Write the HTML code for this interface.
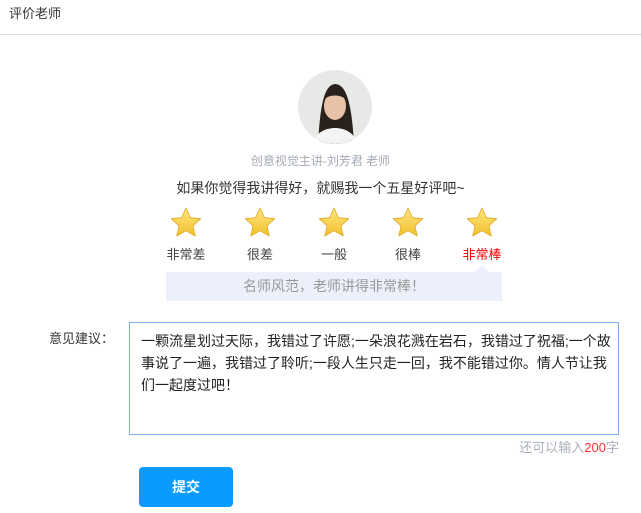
<!DOCTYPE html>
<html><head><meta charset="utf-8"><style>
body{margin:0;width:641px;height:513px;background:#fff;font-family:"Liberation Sans","Noto Sans CJK SC",sans-serif;position:relative;overflow:hidden;color:#333}
.a{position:absolute}
.hdr{left:9px;top:5px;font-size:13px;color:#333;line-height:18px}
.line{left:0;top:34px;width:641px;height:1px;background:#ddd}
.av{left:298px;top:70px;width:74px;height:74px;border-radius:50%;background:#e6e9e6;overflow:hidden}
.c{width:641px;left:0;text-align:center}
.lab{top:246px;font-size:13px;width:60px;text-align:center;line-height:18px;color:#444}
.tip{left:166px;top:272px;width:336px;height:29px;background:#ebf0fa;text-align:center;line-height:29px;font-size:14px;color:#999}
.ta{left:129px;top:322px;width:470px;height:97px;border:1px solid #82aaf0;padding:7px 7px 7px 11px;font-size:14px;line-height:22px;color:#222}
.btn{left:139px;top:467px;width:94px;height:40px;background:#0a9bff;border-radius:4px;color:#fff;font-size:14px;font-weight:bold;text-align:center;line-height:40px}
</style></head><body>
<div class="a hdr">评价老师</div>
<div class="a line"></div>
<div class="a av"><svg width="74" height="74"><path d="M20 74 C22 40 25 15 37 14 C50 14 54 40 56 74Z" fill="#2a201c"/><ellipse cx="37" cy="36" rx="11" ry="14" fill="#e8c2a8"/><path d="M14 74 C18 62 28 58 37 58 C46 58 56 62 60 74Z" fill="#f4f4f4"/><path d="M26 30 C28 18 46 18 48 30 C44 24 30 24 26 30Z" fill="#2a201c"/></svg></div>
<div class="a c" style="top:153px;font-size:12px;color:#a3a9b5;line-height:16px">创意视觉主讲-刘芳君 老师</div>
<div class="a c" style="top:179px;font-size:14px;color:#333;line-height:18px">如果你觉得我讲得好，就赐我一个五星好评吧~</div>
<svg class="a" style="left:0;top:205px" width="641" height="34">
<defs><linearGradient id="g" x1="0" y1="0" x2="0" y2="1"><stop offset="0" stop-color="#ffe680"/><stop offset="1" stop-color="#f2c12e"/></linearGradient>
<path id="s" d="M0 -15 L4.4 -5.3 L14.7 -4.3 L7 2.8 L9.2 13 L0 7.7 L-9.2 13 L-7 2.8 L-14.7 -4.3 L-4.4 -5.3Z" fill="url(#g)" stroke="#e0a81a" stroke-width="0.8" stroke-linejoin="round"/></defs>
<use href="#s" x="186" y="18"/><use href="#s" x="260" y="18"/><use href="#s" x="334" y="18"/><use href="#s" x="408" y="18"/><use href="#s" x="482" y="18"/>
</svg>
<div class="a lab" style="left:156px">非常差</div>
<div class="a lab" style="left:230px">很差</div>
<div class="a lab" style="left:304px">一般</div>
<div class="a lab" style="left:378px">很棒</div>
<div class="a lab" style="left:452px;color:#f00">非常棒</div>
<svg class="a" style="left:474px;top:265px" width="16" height="8"><path d="M0 8 L8 0 L16 8Z" fill="#ebf0fa"/></svg>
<div class="a tip">名师风范，老师讲得非常棒！</div>
<div class="a" style="left:49px;top:330px;font-size:13px;color:#333;line-height:18px">意见建议：</div>
<div class="a ta">一颗流星划过天际，我错过了许愿;一朵浪花溅在岩石，我错过了祝福;一个故事说了一遍，我错过了聆听;一段人生只走一回，我不能错过你。情人节让我们一起度过吧！</div>
<div class="a" style="right:22px;top:439px;font-size:13px;color:#aab0bb;line-height:18px">还可以输入<span style="color:#f33">200</span>字</div>
<div class="a btn">提交</div>
</body></html>
